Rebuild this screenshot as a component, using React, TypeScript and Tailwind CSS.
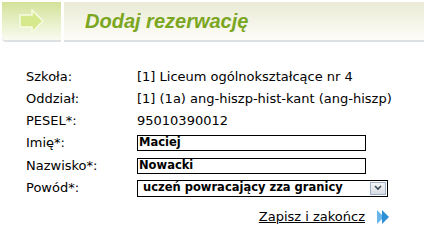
import React from "react";

const rows: [string, string, string][] = [
  ["Szkoła:", "[1] Liceum ogólnokształcące nr 4", "h-[23px]"],
  ["Oddział:", "[1] (1a) ang-hiszp-hist-kant (ang-hiszp)", "h-[22px]"],
  ["PESEL*:", "95010390012", "h-[22px]"],
];

function HeaderArrow() {
  return (
    <svg width="26" height="24" viewBox="0 0 26 24">
      <polygon
        points="1,6 13,6 13,1 24,12 13,23 13,18 1,18"
        fill="#d6e98c"
        stroke="#f6fbe2"
        strokeWidth="1.5"
      />
    </svg>
  );
}

function BlueArrows() {
  return (
    <svg width="13" height="14" viewBox="0 0 13 14">
      <polygon points="0,0 7,7 0,14" fill="#6ab6ea" />
      <polygon points="5,0 12,7 5,14" fill="#2f8fd6" />
    </svg>
  );
}

function Field({ value }: { value: string }) {
  return (
    <div className="flex h-[16px] w-[229px] items-center border border-black bg-white px-[1px] text-[11.5px] font-bold leading-none">
      {value}
    </div>
  );
}

export default function App() {
  return (
    <div className="h-[229px] w-[424px] bg-white font-['DejaVu_Sans',Verdana,sans-serif] text-[13px] text-black">
      {/* nagłówek */}
      <div className="flex h-[42px] pl-[2px] pt-[2px]">
        <div className="flex w-[59px] items-center justify-center rounded-bl-[4px] border-b-2 border-[#dde1e3] bg-gradient-to-b from-[#d3e298] to-[#f9fbf1]">
          <HeaderArrow />
        </div>
        <div className="ml-[3px] flex flex-1 items-center border-b-2 border-[#dde1e3] bg-gradient-to-b from-[#eaead6] to-[#fdfdf8] pl-[21px]">
          <span className="font-['Liberation_Sans',Arial,sans-serif] text-[20px] font-bold italic text-[#7ba61f]">
            Dodaj rezerwację
          </span>
        </div>
      </div>

      <div className="pl-[26px] pt-[23px]">
        {rows.map(([label, value, h]) => (
          <div key={label} className={`grid ${h} grid-cols-[111px_1fr] items-center`}>
            <span>{label}</span>
            <span>{value}</span>
          </div>
        ))}
        <div className="grid h-[22px] grid-cols-[111px_1fr] items-center">
          <span>Imię*:</span>
          <Field value="Maciej" />
        </div>
        <div className="grid h-[23px] grid-cols-[111px_1fr] items-center">
          <span>Nazwisko*:</span>
          <Field value="Nowacki" />
        </div>
        <div className="grid h-[22px] grid-cols-[111px_1fr] items-center">
          <span>Powód*:</span>
          <div className="flex h-[17px] w-[251px] items-center border border-black bg-white text-[11.5px] font-bold leading-none">
            <span className="flex-1 pl-[5px]">uczeń powracający zza granicy</span>
            <span className="mr-[1px] flex h-[13px] w-[16px] items-center justify-center border border-[#9fb0c8] bg-gradient-to-b from-[#f4f4f4] to-[#d8dde4]">
              <svg width="8" height="6" viewBox="0 0 8 6">
                <polyline points="1,1 4,4 7,1" fill="none" stroke="#3c4a5c" strokeWidth="1.6" />
              </svg>
            </span>
          </div>
        </div>
      </div>

      <div className="mt-[8px] flex items-center justify-end gap-[12px] pr-[34px]">
        <a href="#" className="underline">
          Zapisz i zakończ
        </a>
        <BlueArrows />
      </div>
    </div>
  );
}
